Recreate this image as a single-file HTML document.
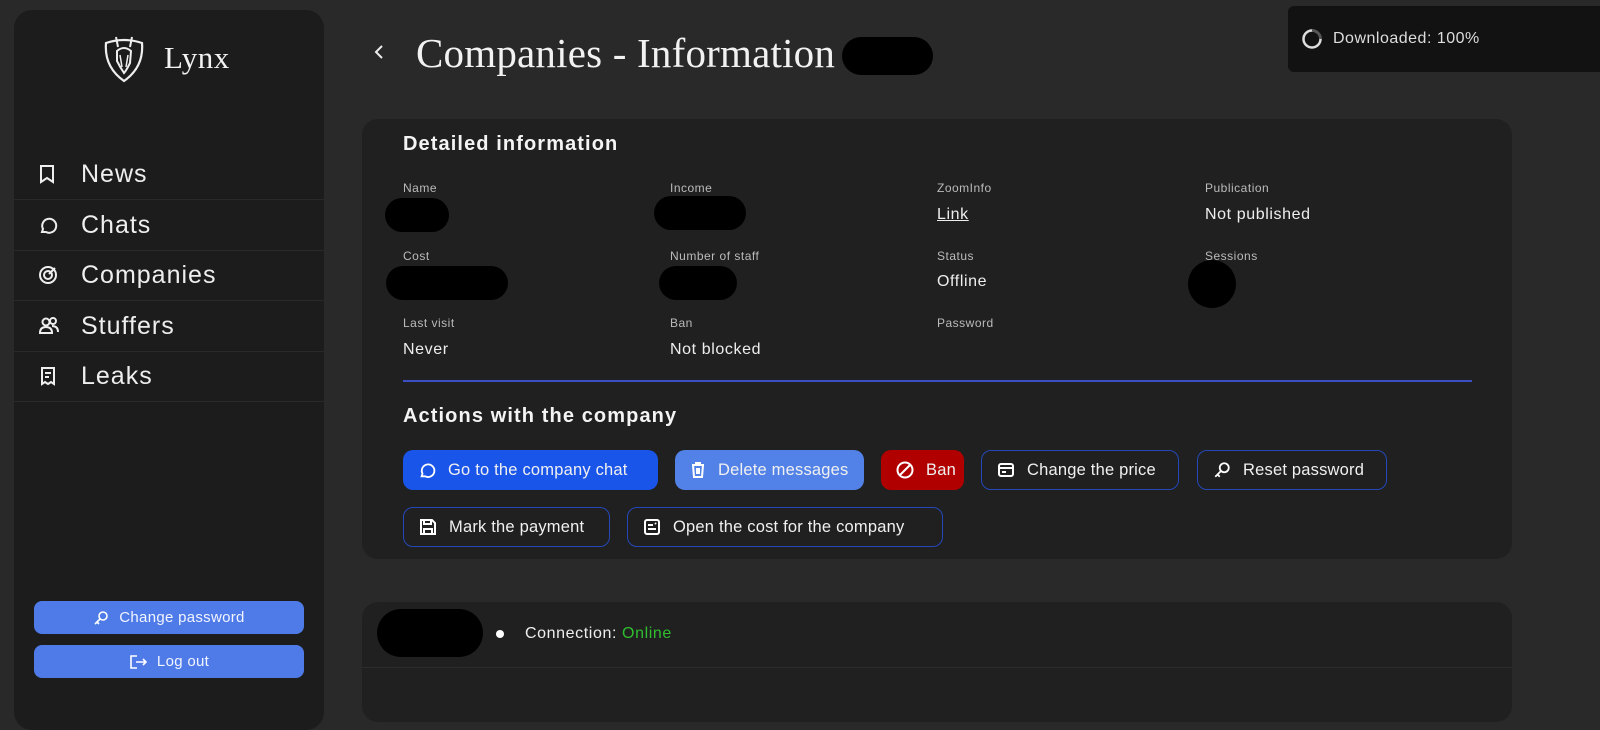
<!DOCTYPE html>
<html><head><meta charset="utf-8"><style>
*{box-sizing:border-box;margin:0;padding:0}
body{width:1600px;height:699px;overflow:hidden;background:#292929;font-family:"Liberation Sans",sans-serif;color:#eee;position:relative;letter-spacing:0.5px}
.abs{position:absolute}
.side{left:14px;top:10px;width:310px;height:720px;background:#1c1c1c;border-radius:18px}
.nav{left:14px;width:310px;height:51px;border-bottom:1px solid #2a2a2a;font-size:25px;color:#eee;letter-spacing:1px}
.nav span{position:absolute;left:67px;top:11px}
.nav svg{position:absolute;left:24px;top:15px}
.sbtn{left:34px;width:270px;height:33px;background:#4f7be8;border-radius:8px;font-size:15px;color:#f2f4ff;display:flex;align-items:center;justify-content:center;gap:10px;letter-spacing:0.3px}
.card{left:362px;width:1150px;background:#202020;border-radius:16px}
.h{font-weight:bold;font-size:20px;color:#f4f4f4;letter-spacing:1.1px}
.lbl{font-size:12px;color:#bbb}
.val{font-size:16px;color:#eee;letter-spacing:0.6px}
.blob{background:#000;border-radius:20px}
.btn{height:40px;border-radius:10px;font-size:16.5px;color:#f0f0f0;display:flex;align-items:center;padding-left:15px;gap:12px;letter-spacing:0.2px;white-space:nowrap}
.ob{border:1.5px solid #2448b8}
</style></head><body>
<div class="abs side"></div>
<svg class="abs" style="left:100px;top:33px" width="48" height="50" viewBox="0 0 48 50" fill="none" stroke="#eee" stroke-width="2.2"><path d="M6 10 Q24 4 42 10 Q44 34 24 48 Q4 34 6 10Z"/><path d="M16 4 L18 14 M32 4 L30 14 M17 18 Q24 12 31 18 L30 30 Q26 38 24 40 Q20 34 17 28Z" stroke-width="2"/><path d="M20 22 L22 34 M28 22 L26 34" stroke-width="1.5"/></svg>
<div class="abs" style="left:164px;top:40px;font-family:'Liberation Serif',serif;font-size:31px;color:#f2f2f2">Lynx</div>

<div class="abs nav" style="top:149px"><svg width="18" height="20" viewBox="0 0 18 20" fill="none" stroke="#eee" stroke-width="2"><path d="M3 2h12v16l-6-4-6 4z"/></svg><span>News</span></div>
<div class="abs nav" style="top:200px"><svg width="20" height="20" viewBox="0 0 20 20" fill="none" stroke="#eee" stroke-width="2"><path d="M4 17l1-3a7 7 0 1 1 3 3z"/></svg><span>Chats</span></div>
<div class="abs nav" style="top:250px"><svg width="20" height="20" viewBox="0 0 20 20" fill="none" stroke="#eee" stroke-width="2"><circle cx="10" cy="10" r="8"/><circle cx="10" cy="10" r="4"/><path d="M11 9l6-6"/></svg><span>Companies</span></div>
<div class="abs nav" style="top:301px"><svg width="22" height="20" viewBox="0 0 22 20" fill="none" stroke="#eee" stroke-width="2"><circle cx="8" cy="6" r="3.5"/><circle cx="15" cy="5" r="3"/><path d="M2 17q0-6 6-6t6 6z M14 10q6 0 6 6"/></svg><span>Stuffers</span></div>
<div class="abs nav" style="top:351px"><svg width="20" height="20" viewBox="0 0 20 20" fill="none" stroke="#eee" stroke-width="2"><path d="M4 2h12v16l-3-2-3 2-3-2-3 2z M7 7h6 M7 11h4"/></svg><span>Leaks</span></div>

<div class="abs sbtn" style="top:601px"><svg width="16" height="16" viewBox="0 0 16 16" fill="none" stroke="#fff" stroke-width="1.6"><circle cx="10" cy="6" r="4"/><path d="M7 9l-5 5 M4 12l2 2"/></svg>Change password</div>
<div class="abs sbtn" style="top:645px"><svg width="18" height="16" viewBox="0 0 18 16" fill="none" stroke="#fff" stroke-width="1.6"><path d="M8 2H2v12h6 M7 8h10 M14 5l3 3-3 3"/></svg>Log out</div>

<svg class="abs" style="left:372px;top:43px" width="14" height="18" viewBox="0 0 14 18" fill="none" stroke="#eee" stroke-width="2"><path d="M10 3L4 9l6 6"/></svg>
<div class="abs" style="left:416px;top:29px;font-family:'Liberation Serif',serif;font-size:41px;color:#f2f2f2;letter-spacing:0.2px">Companies - Information</div>
<div class="abs blob" style="left:842px;top:37px;width:91px;height:38px"></div>

<div class="abs" style="left:1288px;top:6px;width:320px;height:66px;background:#121212;border-radius:6px"></div>
<svg class="abs" style="left:1301px;top:28px" width="22" height="22" viewBox="0 0 22 22" fill="none"><circle cx="11" cy="11" r="8.5" stroke="#ddd" stroke-width="2.5"/><path d="M11 2.5a8.5 8.5 0 0 1 8.5 8.5" stroke="#555" stroke-width="2.5"/></svg>
<div class="abs" style="left:1333px;top:30px;font-size:16px;color:#ddd">Downloaded: 100%</div>

<div class="abs card" style="top:119px;height:440px"></div>
<div class="abs h" style="left:403px;top:133px">Detailed information</div>
<div class="abs lbl" style="left:403px;top:181px">Name</div>
<div class="abs lbl" style="left:670px;top:181px">Income</div>
<div class="abs lbl" style="left:937px;top:181px">ZoomInfo</div>
<div class="abs lbl" style="left:1205px;top:181px">Publication</div>
<div class="abs blob" style="left:385px;top:198px;width:64px;height:34px"></div>
<div class="abs blob" style="left:654px;top:196px;width:92px;height:34px"></div>
<div class="abs val" style="left:937px;top:206px;text-decoration:underline">Link</div>
<div class="abs val" style="left:1205px;top:206px">Not published</div>
<div class="abs lbl" style="left:403px;top:249px">Cost</div>
<div class="abs lbl" style="left:670px;top:249px">Number of staff</div>
<div class="abs lbl" style="left:937px;top:249px">Status</div>
<div class="abs lbl" style="left:1205px;top:249px">Sessions</div>
<div class="abs blob" style="left:386px;top:266px;width:122px;height:34px"></div>
<div class="abs blob" style="left:659px;top:266px;width:78px;height:34px"></div>
<div class="abs val" style="left:937px;top:273px">Offline</div>
<div class="abs blob" style="left:1188px;top:260px;width:48px;height:48px;border-radius:50%"></div>
<div class="abs lbl" style="left:403px;top:316px">Last visit</div>
<div class="abs lbl" style="left:670px;top:316px">Ban</div>
<div class="abs lbl" style="left:937px;top:316px">Password</div>
<div class="abs val" style="left:403px;top:341px">Never</div>
<div class="abs val" style="left:670px;top:341px">Not blocked</div>
<div class="abs" style="left:403px;top:380px;width:1069px;height:1.5px;background:#3a4fc4"></div>
<div class="abs h" style="left:403px;top:405px">Actions with the company</div>

<div class="abs btn" style="left:403px;top:450px;width:255px;background:#1a55ea"><svg width="18" height="18" viewBox="0 0 20 20" fill="none" stroke="#fff" stroke-width="2"><path d="M4 17l1-3a7 7 0 1 1 3 3z"/></svg>Go to the company chat</div>
<div class="abs btn" style="left:675px;top:450px;width:189px;background:#5282e8"><svg width="16" height="18" viewBox="0 0 16 18" fill="none" stroke="#fff" stroke-width="2"><path d="M2 4h12 M6 4V2h4v2 M3 4l1 12h8l1-12 M7 7v6 M9 7v6"/></svg>Delete messages</div>
<div class="abs btn" style="left:881px;top:450px;width:83px;background:#b00000"><svg width="18" height="18" viewBox="0 0 18 18" fill="none" stroke="#fff" stroke-width="2"><circle cx="9" cy="9" r="7.5"/><path d="M4 14L14 4"/></svg>Ban</div>
<div class="abs btn ob" style="left:981px;top:450px;width:198px"><svg width="18" height="18" viewBox="0 0 18 18" fill="none" stroke="#fff" stroke-width="2"><rect x="2" y="3" width="14" height="12" rx="2"/><path d="M2 7h14 M5 11h4"/></svg>Change the price</div>
<div class="abs btn ob" style="left:1197px;top:450px;width:190px"><svg width="18" height="18" viewBox="0 0 16 16" fill="none" stroke="#fff" stroke-width="1.6"><circle cx="10" cy="6" r="4"/><path d="M7 9l-5 5 M4 12l2 2"/></svg>Reset password</div>
<div class="abs btn ob" style="left:403px;top:507px;width:207px"><svg width="18" height="18" viewBox="0 0 18 18" fill="none" stroke="#fff" stroke-width="2"><path d="M2 2h11l3 3v11H2z M5 2v4h7V2 M5 16v-5h8v5"/></svg>Mark the payment</div>
<div class="abs btn ob" style="left:627px;top:507px;width:316px"><svg width="18" height="18" viewBox="0 0 18 18" fill="none" stroke="#fff" stroke-width="2"><rect x="2" y="2" width="14" height="14" rx="2"/><path d="M5 7h5 M5 11h8 M12 5l1 1"/></svg>Open the cost for the company</div>

<div class="abs card" style="top:602px;height:120px"></div>
<div class="abs" style="left:362px;top:667px;width:1150px;height:1px;background:#2c2c2c"></div>
<div class="abs blob" style="left:377px;top:609px;width:106px;height:48px;border-radius:24px"></div>
<div class="abs" style="left:496px;top:630px;width:8px;height:8px;border-radius:50%;background:#fff"></div>
<div class="abs val" style="left:525px;top:625px">Connection: <span style="color:#2fbf2f">Online</span></div>
</body></html>
